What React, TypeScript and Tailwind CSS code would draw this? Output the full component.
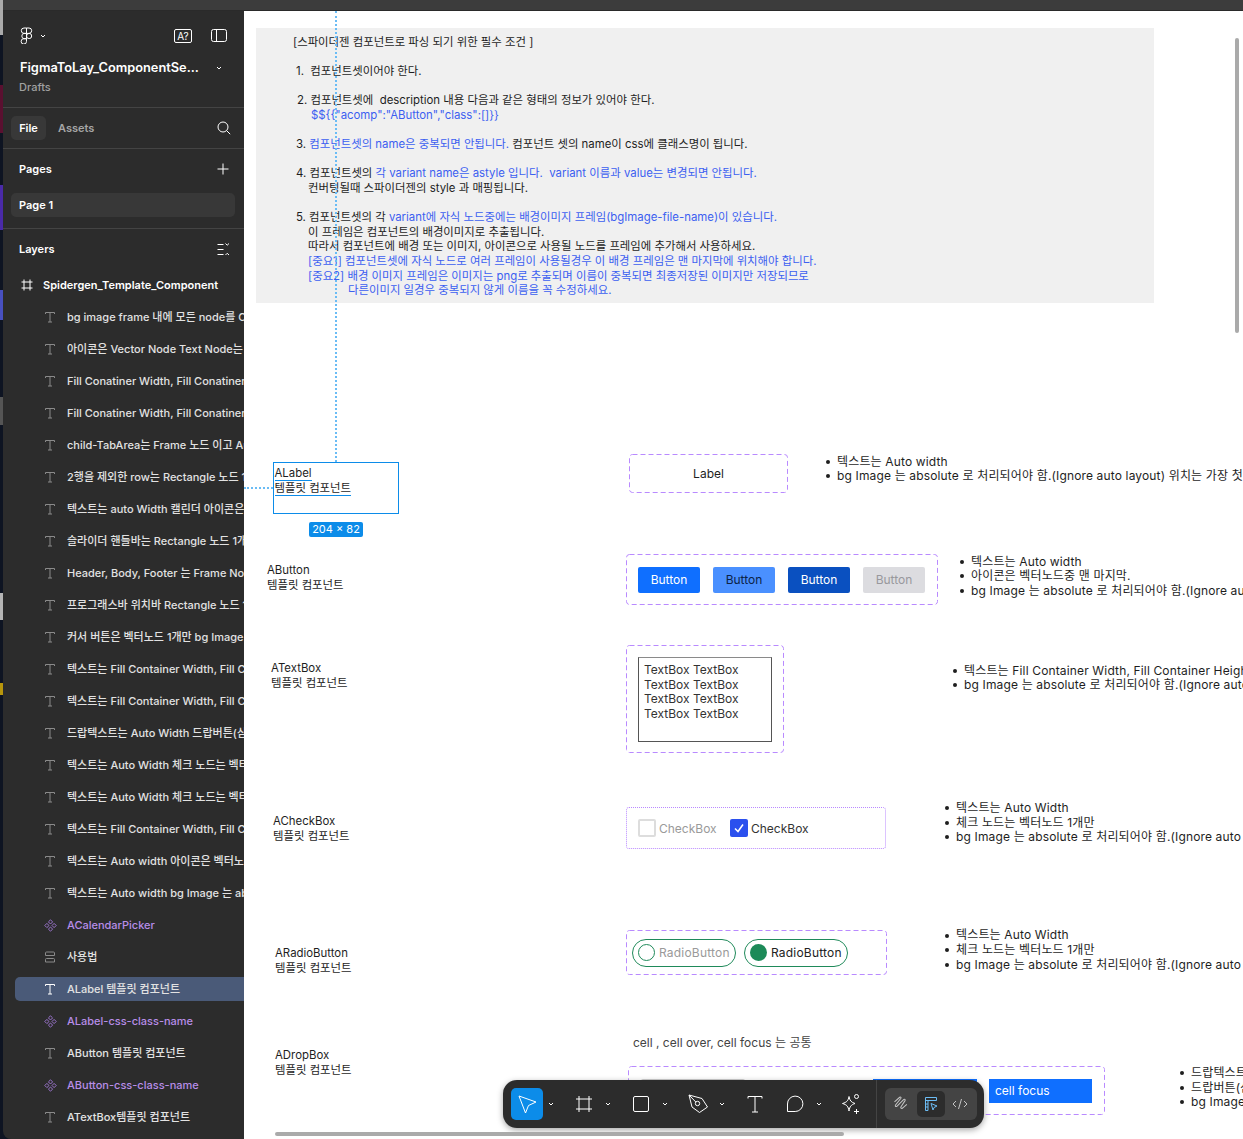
import { ReactNode } from 'react'

const LAYERS_TOP = [
  'bg image frame 내에 모든 node를 Component',
  '아이콘은 Vector Node Text Node는 Auto',
  'Fill Conatiner Width, Fill Conatiner Height',
  'Fill Conatiner Width, Fill Conatiner Height',
  'child-TabArea는 Frame 노드 이고 Auto',
  '2행을 제외한 row는 Rectangle 노드 1개',
  '텍스트는 auto Width 캘린더 아이콘은 벡터',
  '슬라이더 핸들바는 Rectangle 노드 1개만',
  'Header, Body, Footer 는 Frame Node',
  '프로그래스바 위치바 Rectangle 노드 1개',
  '커서 버튼은 벡터노드 1개만 bg Image 는',
  '텍스트는 Fill Container Width, Fill Container',
  '텍스트는 Fill Container Width, Fill Container',
  '드랍텍스트는 Auto Width 드랍버튼(삼각형)',
  '텍스트는 Auto Width 체크 노드는 벡터노드',
  '텍스트는 Auto Width 체크 노드는 벡터노드',
  '텍스트는 Fill Container Width, Fill Container',
  '텍스트는 Auto width 아이콘은 벡터노드',
  '텍스트는 Auto width bg Image 는 absolute',
]

const TextIcon = ({ light }: { light?: boolean }) => (
  <svg width="12" height="12" viewBox="0 0 12 12" fill="none" stroke={light ? '#ffffff' : '#8a8a8a'} strokeWidth="1">
    <path d="M1.5 3V1.5h9V3M6 1.5v9.5M4 11h4" />
  </svg>
)

const ComponentIcon = () => (
  <svg width="13" height="13" viewBox="0 0 13 13" fill="none" stroke="#9a74cc" strokeWidth="1">
    <path d="M6.5 .8 8.6 2.9 6.5 5 4.4 2.9zM6.5 8 8.6 10.1 6.5 12.2 4.4 10.1zM2.9 4.4 5 6.5 2.9 8.6 .8 6.5zM10.1 4.4 12.2 6.5 10.1 8.6 8 6.5z" />
  </svg>
)

const SectionIcon = () => (
  <svg width="12" height="12" viewBox="0 0 12 12" fill="none" stroke="#8a8a8a" strokeWidth="1">
    <path d="M1.5 4.5V2a1 1 0 0 1 1-1h7a1 1 0 0 1 1 1v2.5zM2.5 7.5h7a1 1 0 0 1 1 1V11h-9V8.5a1 1 0 0 1 1-1z" />
  </svg>
)

const LayerRow = ({ icon, label, purple, selected }: { icon: ReactNode; label: string; purple?: boolean; selected?: boolean }) => (
  <div className={selected ? 'my-1 ml-3 flex h-6 items-center rounded-l-[5px] bg-[#4a5a78] pl-[29px]' : 'my-1 ml-3 flex h-6 items-center pl-[29px]'}>
    <span className="flex w-[23px] shrink-0">{icon}</span>
    <span className={purple ? 'whitespace-nowrap text-[#b88de8]' : 'whitespace-nowrap text-[#e2e2e2]'}>{label}</span>
  </div>
)

const Chevron = () => (
  <svg width="16" height="32" viewBox="0 0 16 32" fill="none" stroke="#ffffff" strokeWidth="1">
    <path d="M6 15l2 2 2-2" />
  </svg>
)

const ToolIcon = ({ children }: { children: ReactNode }) => (
  <svg width="32" height="32" viewBox="0 0 32 32" fill="none" stroke="#ffffff" strokeWidth="1" strokeLinejoin="round">
    {children}
  </svg>
)

// dashes in the picture are longer than what a 1px css dashed border gives
const DashedFrame = () => (
  <svg className="pointer-events-none absolute inset-0 h-full w-full" fill="none" stroke="#b98aff" strokeWidth="1" strokeDasharray="5 3">
    <rect x=".5" y=".5" rx="3" className="h-[calc(100%-1px)] w-[calc(100%-1px)]" />
  </svg>
)

const BulletList = ({ className, items }: { className: string; items: string[] }) => (
  <ul className={className}>
    {items.map((item) => (
      <li key={item} className="flex items-center whitespace-nowrap tracking-[0.15px]">
        <span className="ml-[-11px] mr-[7px] h-1 w-1 shrink-0 rounded-full bg-[#1e1e1e]" />
        {item}
      </li>
    ))}
  </ul>
)

const Sidebar = () => (
  <aside className="flex w-[241px] shrink-0 flex-col overflow-hidden rounded-bl-lg bg-[#2c2c2c] text-[11px] font-medium">
    <section className="h-[97px] border-b border-[#444444] pl-[16px] pr-[16px]">
      <div className="flex items-center pt-[16px]">
        <svg width="13" height="17" viewBox="0 0 13 17" fill="none" stroke="#ffffff" strokeWidth="1" className="ml-[1px]">
          <path d="M6.5 1H4a2.7 2.7 0 0 0 0 5.4h2.5zM6.5 1H9a2.7 2.7 0 0 1 0 5.4H6.5zM6.5 6.4H4a2.7 2.7 0 0 0 0 5.3h2.5zM6.5 11.7H4a2.7 2.7 0 1 0 2.5 2.7zM11.700 9a2.600 2.600 0 1 1-5.200 0 2.600 2.600 0 0 1 5.200 0z" />
        </svg>
        <svg width="8" height="8" viewBox="0 0 8 8" fill="none" stroke="#ffffff" className="ml-[6px]">
          <path d="M2 3l2 2 2-2" />
        </svg>
        <span className="ml-auto mr-[19px] flex h-[14px] w-[18px] items-center justify-center rounded-[2px] border border-white text-[10px] font-normal leading-none text-white">A?</span>
        <svg width="16" height="13" viewBox="0 0 16 13" fill="none" stroke="#ffffff" strokeWidth="1" className="mr-[1px]">
          <rect x=".5" y=".5" width="15" height="12" rx="2" />
          <path d="M5.500 .5v12" />
        </svg>
      </div>
      <div className="ml-[1px] mt-[16px] flex items-center">
        <span className="text-[12.8px] font-semibold leading-4 text-white">FigmaToLay_ComponentSe...</span>
        <svg width="8" height="8" viewBox="0 0 8 8" fill="none" stroke="#ffffff" className="ml-[16px]">
          <path d="M2 3l2 2 2-2" />
        </svg>
      </div>
      <p className="mt-[3px] leading-4 text-[#a0a0a0]">Drafts</p>
    </section>

    <section className="flex h-[41px] items-center border-b border-[#444444] pl-2 pr-[13px]">
      <span className="flex h-6 w-[35px] items-center justify-center rounded-[5px] bg-[#383838] font-semibold text-white">File</span>
      <span className="ml-3 font-semibold text-[#a6a6a6]">Assets</span>
      <svg width="14" height="14" viewBox="0 0 14 14" fill="none" stroke="#ffffff" strokeWidth="1" className="ml-auto">
        <circle cx="6" cy="6" r="5" />
        <path d="M9.700 9.700l3.500 3.500" />
      </svg>
    </section>

    <section className="h-[80px] border-b border-[#444444] px-2">
      <div className="mb-1 flex h-10 items-center justify-between pl-2 pr-[7px] font-semibold text-white">
        <span>Pages</span>
        <svg width="12" height="12" viewBox="0 0 12 12" stroke="#ffffff" strokeWidth="1">
          <path d="M6 .5v11M.5 6h11" />
        </svg>
      </div>
      <div className="flex h-6 w-[224px] items-center rounded-[5px] bg-[#383838] pl-2 font-semibold text-white">Page 1</div>
    </section>

    <section className="flex h-10 items-center pl-4 pr-[14px] font-semibold text-white">
      <span>Layers</span>
      <svg width="13" height="13" viewBox="0 0 13 13" fill="none" stroke="#ffffff" strokeWidth="1" className="ml-auto">
        <path d="M.5 1.500h6M.5 6.500h6M.5 11.500h6M8.500 .5l1.700 1.700L12 .5M8.500 12l1.700-1.700L12 12" />
      </svg>
    </section>

    <div className="flex h-8 items-center pl-[18px] font-semibold text-white">
      <svg width="12" height="12" viewBox="0 0 12 12" stroke="#ffffff" strokeWidth="1" className="mr-[10px]">
        <path d="M3 .5v11M9 .5v11M.5 3h11M.5 9h11" />
      </svg>
      <span className="whitespace-nowrap">Spidergen_Template_Component</span>
    </div>
    {LAYERS_TOP.map((label, i) => (
      <LayerRow key={i} icon={<TextIcon />} label={label} />
    ))}
    <LayerRow icon={<ComponentIcon />} label="ACalendarPicker" purple />
    <LayerRow icon={<SectionIcon />} label="사용법" />
    <LayerRow icon={<TextIcon light />} label="ALabel 템플릿 컴포넌트" selected />
    <LayerRow icon={<ComponentIcon />} label="ALabel-css-class-name" purple />
    <LayerRow icon={<TextIcon />} label="AButton 템플릿 컴포넌트" />
    <LayerRow icon={<ComponentIcon />} label="AButton-css-class-name" purple />
    <LayerRow icon={<TextIcon />} label="ATextBox템플릿 컴포넌트" />
  </aside>
)

const Blue = ({ children }: { children: ReactNode }) => <span className="text-[#3c5ff0]">{children}</span>

const Conditions = () => (
  <div className="absolute left-[12px] top-[17px] h-[275px] w-[898px] whitespace-pre bg-[#f0f0f0] pt-[7px] text-[11.4px] leading-[14.6px] text-[#1e1e1e]">
    <p className="pl-[37px]">[스파이더젠 컴포넌트로 파싱 되기 위한 필수 조건 ]</p>
    <p>&nbsp;</p>
    <p className="pl-[40px]">1.  컴포넌트셋이어야 한다.</p>
    <p>&nbsp;</p>
    <p className="pl-[41px]">2. 컴포넌트셋에  description 내용 다음과 같은 형태의 정보가 있어야 한다.</p>
    <p className="pl-[55px]"><Blue>{'$${{"acomp":"AButton","class":[]}}'}</Blue></p>
    <p>&nbsp;</p>
    <p className="pl-[40px]">3. <Blue>컴포넌트셋의 name은 중복되면 안됩니다.</Blue> 컴포넌트 셋의 name이 css에 클래스명이 됩니다.</p>
    <p>&nbsp;</p>
    <p className="pl-[40px]">4. 컴포넌트셋의 <Blue>각 variant name은 astyle 입니다.  variant 이름과 value는 변경되면 안됩니다.</Blue></p>
    <p className="pl-[52px]">컨버팅될때 스파이더젠의 style 과 매핑됩니다.</p>
    <p>&nbsp;</p>
    <p className="pl-[40px]">5. 컴포넌트셋의 각 <Blue>variant에 자식 노드중에는 배경이미지 프레임(bgImage-file-name)이 있습니다.</Blue></p>
    <p className="pl-[52px]">이 프레임은 컴포넌트의 배경이미지로 추출됩니다.</p>
    <p className="pl-[52px]">따라서 컴포넌트에 배경 또는 이미지, 아이콘으로 사용될 노드를 프레임에 추가해서 사용하세요.</p>
    <p className="pl-[52px]"><Blue>[중요1] 컴포넌트셋에 자식 노드로 여러 프레임이 사용될경우 이 배경 프레임은 맨 마지막에 위치해야 합니다.</Blue></p>
    <p className="pl-[52px]"><Blue>[중요2] 배경 이미지 프레임은 이미지는 png로 추출되며 이름이 중복되면 최종저장된 이미지만 저장되므로</Blue></p>
    <p className="pl-[92px]"><Blue>다른이미지 일경우 중복되지 않게 이름을 꼭 수정하세요.</Blue></p>
  </div>
)

const Toolbar = () => (
  <div className="absolute left-[259px] top-[1069px] flex h-12 w-[481px] items-center rounded-[14px] bg-[#2c2c2c] pl-2 shadow-[0_2px_6px_rgba(0,0,0,0.35)]">
    <div className="flex">
      <span className="flex rounded-[5px] bg-[#0c8ce9]">
        <ToolIcon><path d="M8 8l17 6-7.500 3.500L14.500 25z" /></ToolIcon>
      </span>
      <Chevron />
    </div>
    <div className="ml-[9px] flex">
      <ToolIcon><path d="M11 8v16M21 8v16M8 11h16M8 21h16" /></ToolIcon>
      <Chevron />
    </div>
    <div className="ml-[9px] flex">
      <ToolIcon><rect x="8.500" y="8.500" width="15" height="15" rx="1.500" /></ToolIcon>
      <Chevron />
    </div>
    <div className="ml-[9px] flex">
      <ToolIcon>
        <path d="M7 7l13 3.500 5.500 8.500-8 5.500-7.500-5.500z" />
        <circle cx="15.500" cy="15.500" r="2.200" />
        <path d="M7 7l6.800 7" />
      </ToolIcon>
      <Chevron />
    </div>
    <div className="ml-[9px] flex">
      <ToolIcon><path d="M9 10.500V8.500h14v2M16 8.500V24M13 24h6" /></ToolIcon>
    </div>
    <div className="ml-2 flex">
      <ToolIcon><path d="M8.500 23.500V16a7.700 7.700 0 1 1 7.700 7.500z" /></ToolIcon>
      <Chevron />
    </div>
    <div className="ml-2 flex">
      <ToolIcon>
        <path d="M14 8.500c.8 4.300 2.200 5.700 6 7-3.800 1.300-5.200 2.700-6 7.500-.8-4.800-2.200-6.200-6.500-7.500 4.300-1.300 5.700-2.700 6.500-7z" />
        <circle cx="21.500" cy="8.500" r="2" />
        <path d="M21.500 21v5M19 23.500h5" />
      </ToolIcon>
    </div>
    <div className="ml-[9px] h-12 w-px bg-[#444444]" />
    <div className="ml-2 flex h-8 w-[92px] items-center rounded-[6px] bg-[#444444] pl-[1px]">
      <svg width="30" height="26" viewBox="3 3.200 23 20" fill="none" stroke="#c4c4c4" strokeWidth=".8" className="shrink-0">
        <path d="M9.500 11.500l4-3.500c.8-.6 1.400.2.800 1l-4 5c-.6 1 .4 1.600 1.200.8l5-5c.8-.8 1.600 0 1 1l-3 4.500c-.6 1 .3 1.700 1.200 1l3.300-2.800" />
      </svg>
      <span className="ml-[1px] flex h-[26px] w-[28px] shrink-0 items-center justify-center rounded-[5px] bg-[#2c2c2c]">
        <svg width="16" height="16" viewBox="0 0 16 16" fill="none" stroke="#6cbdf5" strokeWidth="1">
          <path d="M2.500 14.500v-13h11v3h-11M5 4.500v10h-2.500M2.500 8h2.500M2.500 11h2.500M8 7.500l6 2.500-3 1.500-1 2.500z" />
        </svg>
      </span>
      <svg width="30" height="26" viewBox="0 0 30 26" fill="none" stroke="#c4c4c4" strokeWidth="1" className="shrink-0">
        <path d="M11 10l-3 3 3 3M19 10l3 3-3 3M16.500 8l-3 10" />
      </svg>
    </div>
  </div>
)

const Canvas = () => (
  <main className="relative min-w-0 flex-1 overflow-hidden bg-white text-xs leading-[14.6px] text-[#1e1e1e]">
    <Conditions />

    <div className="absolute left-[91px] top-0 h-[451px] border-l-2 border-dotted border-[#6abcf5]" />
    <div className="absolute left-0 top-[476px] w-[29px] border-t-2 border-dotted border-[#6abcf5]" />
    <div className="absolute left-[29px] top-[451px] h-[52px] w-[126px] border border-[#0c8ce9] pl-[0.5px] pt-[4px] text-[11.4px]">
      <span className="block w-fit border-b border-[#0c8ce9] leading-[13px]">ALabel</span>
      <span className="mt-px block w-fit border-b border-[#0c8ce9] leading-[13px]">템플릿 컴포넌트</span>
    </div>
    <div className="absolute left-[65px] top-[511px] flex h-[15px] w-[54px] items-center justify-center rounded-[2px] bg-[#0c8ce9] text-[11px] text-white">204 × 82</div>

    <p className="absolute left-[23px] top-[552px] text-[11.4px]">AButton<br />템플릿 컴포넌트</p>
    <p className="absolute left-[27px] top-[650px] text-[11.4px]">ATextBox<br />템플릿 컴포넌트</p>
    <p className="absolute left-[29px] top-[803px] text-[11.4px]">ACheckBox<br />템플릿 컴포넌트</p>
    <p className="absolute left-[31px] top-[935px] text-[11.4px]">ARadioButton<br />템플릿 컴포넌트</p>
    <p className="absolute left-[31px] top-[1037px] text-[11.4px]">ADropBox<br />템플릿 컴포넌트</p>

    <div className="absolute left-[385px] top-[443px] flex h-[39px] w-[159px] items-center justify-center pt-[2px]">
      <DashedFrame />
      Label
    </div>

    <div className="absolute left-[382px] top-[543px] flex h-[51px] w-[312px] items-center gap-[13px] pl-3">
      <DashedFrame />
      <span className="flex h-[26px] w-[62px] items-center justify-center rounded-[2px] bg-[#0f6fff] pt-[2px] text-white">Button</span>
      <span className="flex h-[26px] w-[62px] items-center justify-center rounded-[2px] bg-[#4a90ff] pt-[2px] text-[#0c2347]">Button</span>
      <span className="flex h-[26px] w-[62px] items-center justify-center rounded-[2px] bg-[#0a50c0] pt-[2px] text-white">Button</span>
      <span className="flex h-[26px] w-[62px] items-center justify-center rounded-[2px] bg-[#dcdce0] pt-[2px] text-[#98989d]">Button</span>
    </div>

    <div className="absolute left-[382px] top-[634px] h-[108px] w-[158px] p-3">
      <DashedFrame />
      <div className="h-[85px] w-[134px] border border-[#555555] border-t-[#8a8a8a] pl-[5px] pt-[5px] text-[#333333]">
        <p>TextBox TextBox</p>
        <p>TextBox TextBox</p>
        <p>TextBox TextBox</p>
        <p>TextBox TextBox</p>
      </div>
    </div>

    <div className="absolute left-[382px] top-[796px] flex h-[42px] w-[260px] items-center rounded-[3px] border border-dotted border-[#b98aff] pl-[11px]">
      <span className="h-[18px] w-[18px] rounded-[2px] border-2 border-[#dddddd]" />
      <span className="ml-[3px] mt-[2px] w-[71px] text-[#9a9a9a]">CheckBox</span>
      <span className="flex h-[18px] w-[18px] items-center justify-center rounded-[2px] bg-[#2b50ee]">
        <svg width="12" height="12" viewBox="0 0 12 12" fill="none" stroke="#ffffff" strokeWidth="1.500">
          <path d="M2 6.500l3 3 5-7" />
        </svg>
      </span>
      <span className="ml-[3px] mt-[2px] text-[#333333]">CheckBox</span>
    </div>

    <div className="absolute left-[382px] top-[919px] flex h-[45px] w-[261px] items-center gap-2 pl-[6px]">
      <DashedFrame />
      <span className="flex h-[28px] w-[104px] items-center rounded-full border-[1.5px] border-[#1f8a5a] pl-[5px]">
        <span className="h-[17px] w-[17px] rounded-full border-[1.5px] border-[#1f8a5a]" />
        <span className="ml-[4px] mt-[2px] tracking-[0.2px] text-[#9a9a9a]">RadioButton</span>
      </span>
      <span className="flex h-[28px] w-[104px] items-center rounded-full border-[1.5px] border-[#1f8a5a] pl-[5px]">
        <span className="h-[17px] w-[17px] rounded-full bg-[#1c8a58]" />
        <span className="ml-[4px] mt-[2px] tracking-[0.2px] text-[#222222]">RadioButton</span>
      </span>
    </div>

    <p className="absolute left-[389px] top-[1025px] text-[#444444]">cell , cell over, cell focus 는 공통</p>
    <div className="absolute left-[384px] top-[1055px] flex h-[49px] w-[477px] items-start pl-[13px] pt-[13px]">
      <DashedFrame />
      <span className="h-[23px] w-[104px] rounded-[2px] bg-[#d0d0d0]" />
      <span className="ml-[128px] h-[23px] w-[104px] bg-[#0f6fff]" />
      <span className="ml-[12px] flex h-[24px] w-[103px] items-center bg-[#0f6fff] pl-[6px] text-white">cell focus</span>
    </div>

    <BulletList
      className="absolute left-[593px] top-[443.5px]"
      items={['텍스트는 Auto width', 'bg Image 는 absolute 로 처리되어야 함.(Ignore auto layout) 위치는 가장 첫번째 노드']}
    />
    <BulletList
      className="absolute left-[727px] top-[543.5px]"
      items={['텍스트는 Auto width', '아이콘은 벡터노드중 맨 마지막.', 'bg Image 는 absolute 로 처리되어야 함.(Ignore auto layout)']}
    />
    <BulletList
      className="absolute left-[720px] top-[652.5px]"
      items={['텍스트는 Fill Container Width, Fill Container Height', 'bg Image 는 absolute 로 처리되어야 함.(Ignore auto layout)']}
    />
    <BulletList
      className="absolute left-[712px] top-[790px]"
      items={['텍스트는 Auto Width', '체크 노드는 벡터노드 1개만', 'bg Image 는 absolute 로 처리되어야 함.(Ignore auto layout)']}
    />
    <BulletList
      className="absolute left-[712px] top-[917.4px]"
      items={['텍스트는 Auto Width', '체크 노드는 벡터노드 1개만', 'bg Image 는 absolute 로 처리되어야 함.(Ignore auto layout)']}
    />
    <BulletList
      className="absolute left-[947px] top-[1055px]"
      items={['드랍텍스트는 Auto Width', '드랍버튼(삼각형)은 벡터노드 1개만', 'bg Image 는 absolute 로 처리되어야 함.']}
    />

    <Toolbar />

    <div className="absolute left-[31px] top-[1121px] h-1 w-[569px] rounded-full bg-[#aaaaaa]" />
    <div className="absolute left-[991px] top-[27px] h-[295px] w-1 rounded-full bg-[#aaaaaa]" />
  </main>
)

const App = () => {
  return (
    <div className="flex h-[1139px] w-[1243px] overflow-hidden bg-[#0e1422] font-['Inter','Noto_Sans_CJK_KR',sans-serif]">
      <div className="flex w-[3px] shrink-0 flex-col">
        <div className="h-[35px] bg-[#aaaaaa]" />
        <div className="h-[50px]" />
        <div className="h-[48px] bg-[#5a1030]" />
        <div className="h-[52px]" />
        <div className="h-[45px] bg-[#4a2aa8]" />
        <div className="h-[60px]" />
        <div className="h-[30px] bg-[#4850c0]" />
        <div className="h-[77px]" />
        <div className="h-[28px] bg-[#555555]" />
        <div className="h-[168px]" />
        <div className="h-[27px] bg-[#b5b5b5]" />
        <div className="h-[63px]" />
        <div className="h-[12px] bg-[#b8960c]" />
      </div>
      <div className="flex min-w-0 flex-1 flex-col">
        <div className="h-[11px] shrink-0 border-b border-[#2a2a2a] bg-[#3c3c3c]" />
        <div className="flex min-h-0 flex-1">
          <Sidebar />
          <Canvas />
        </div>
      </div>
    </div>
  )
}

export default App
